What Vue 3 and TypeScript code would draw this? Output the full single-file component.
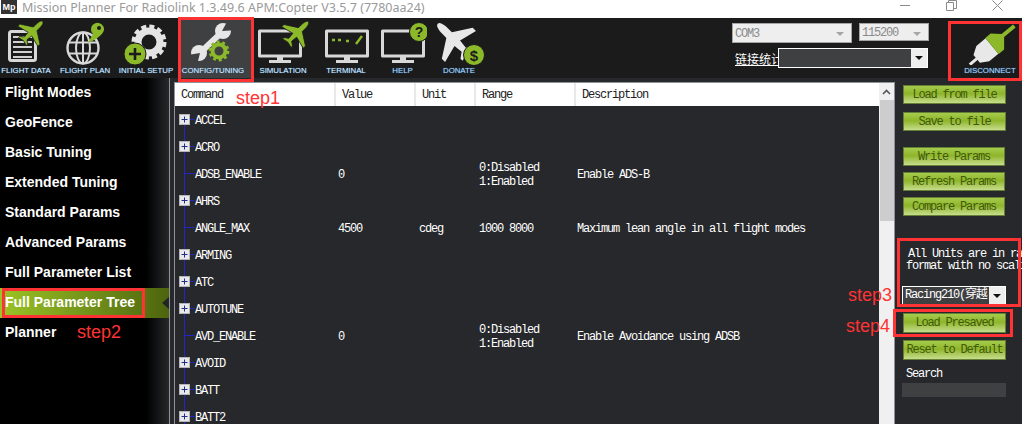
<script setup lang="ts">
interface ParamRow {
  name: string
  group: boolean
  value?: string
  unit?: string
  range?: string[]
  desc?: string
}

const menu: string[] = [
  'Flight Modes',
  'GeoFence',
  'Basic Tuning',
  'Extended Tuning',
  'Standard Params',
  'Advanced Params',
  'Full Parameter List',
  'Full Parameter Tree',
  'Planner'
]

const rows: ParamRow[] = [
  { name: 'ACCEL', group: true },
  { name: 'ACRO', group: true },
  { name: 'ADSB_ENABLE', group: false, value: '0', range: ['0:Disabled', '1:Enabled'], desc: 'Enable ADS-B' },
  { name: 'AHRS', group: true },
  { name: 'ANGLE_MAX', group: false, value: '4500', unit: 'cdeg', range: ['1000 8000'], desc: 'Maximum lean angle in all flight modes' },
  { name: 'ARMING', group: true },
  { name: 'ATC', group: true },
  { name: 'AUTOTUNE', group: true },
  { name: 'AVD_ENABLE', group: false, value: '0', range: ['0:Disabled', '1:Enabled'], desc: 'Enable Avoidance using ADSB' },
  { name: 'AVOID', group: true },
  { name: 'BATT', group: true },
  { name: 'BATT2', group: true }
]

const plane = 'M0,-20 C2.6,-20 3.4,-15 3.4,-11 L3.4,-6 L19,4 L19,8 L3.4,4 L2.6,12 L7.5,15.5 L7.5,18 L0,16.2 L-7.5,18 L-7.5,15.5 L-2.6,12 L-3.4,4 L-19,8 L-19,4 L-3.4,-6 L-3.4,-11 C-3.4,-15 -2.6,-20 0,-20Z'
</script>

<template>
  <div class="page">
    <header class="titlebar">
      <span class="logo">Mp</span>
      <span class="title">Mission Planner For Radiolink 1.3.49.6 APM:Copter V3.5.7 (7780aa24)</span>
      <span class="winbtns">
        <svg width="11" height="11" viewBox="0 0 11 11"><path d="M0 5.5h10" stroke="#8a8a8a" fill="none" /></svg>
        <svg width="11" height="11" viewBox="0 0 11 11"><path d="M.5 2.5h7v8h-7zM2.5 2.5v-2h8v8h-3" stroke="#8a8a8a" fill="none" /></svg>
        <svg width="11" height="11" viewBox="0 0 11 11"><path d="M.5 .5l10 10M10.5 .5l-10 10" stroke="#8a8a8a" fill="none" /></svg>
      </span>
    </header>

    <nav class="toolbar">
      <div class="tool" style="width:52px">
        <svg width="52" height="47" viewBox="0 0 52 47">
          <rect x="9.500" y="13.500" width="26" height="29" rx="2" fill="none" stroke="#d8d8d8" stroke-width="3" />
          <path d="M13 19h19M13 24h19M13 29h19M13 34h19M13 39h19" stroke="#d0d0d0" stroke-width="2.200" />
          <path :d="plane" fill="#8cb92a" stroke="#1b1b1b" transform="translate(32 14) rotate(45) scale(.75)" />
        </svg>
        <span>FLIGHT DATA</span>
      </div>
      <div class="tool" style="width:66px">
        <svg width="66" height="47" viewBox="0 0 66 47">
          <circle cx="31" cy="30" r="15.500" fill="none" stroke="#d8d8d8" stroke-width="2.400" />
          <ellipse cx="31" cy="30" rx="7" ry="15.500" fill="none" stroke="#d8d8d8" stroke-width="2" />
          <path d="M31 15v30M17 24.500h28M17 35.500h28" stroke="#d8d8d8" stroke-width="2" />
          <path d="M36 25c2-4 4-7 5-9a6.500 6.500 0 1 1 11-4c-1 5-9 10-16 13z" fill="#8cb92a" />
          <circle cx="47" cy="10" r="2" fill="#1b1b1b" />
        </svg>
        <span>FLIGHT PLAN</span>
      </div>
      <div class="tool" style="width:56px">
        <svg width="56" height="47" viewBox="0 0 56 47">
          <circle cx="31" cy="24" r="11" fill="none" stroke="#e4e4e4" stroke-width="7" />
          <circle cx="31" cy="24" r="15.500" fill="none" stroke="#e4e4e4" stroke-width="4" stroke-dasharray="5 3.100" />
          <circle cx="17" cy="36" r="11" fill="#8cb92a" stroke="#1b1b1b" />
          <path d="M17 30v12M11 36h12" stroke="#1b1b1b" stroke-width="2.600" />
        </svg>
        <span>INITIAL SETUP</span>
      </div>
      <div class="tool active" style="width:74px;margin-left:4px">
        <svg width="74" height="47" viewBox="0 0 74 47">
          <path d="M24 33L42 16" stroke="#e6e6e6" stroke-width="6" />
          <circle cx="45" cy="13" r="8" fill="#e6e6e6" />
          <path d="M44 13L50 2L60 12z" fill="#3f4042" />
          <circle cx="21" cy="35" r="8" fill="#e6e6e6" />
          <path d="M22 35L10 37L19 47z" fill="#3f4042" />
          <circle cx="41" cy="33" r="6.500" fill="none" stroke="#8cb92a" stroke-width="4" />
          <circle cx="41" cy="33" r="9.200" fill="none" stroke="#8cb92a" stroke-width="2.400" stroke-dasharray="3 2.800" />
        </svg>
        <span class="shift">CONFIG/TUNING</span>
      </div>
      <div class="tool" style="width:62px">
        <svg width="62" height="47" viewBox="0 0 62 47">
          <path d="M7.500 13h41v25h-41z" fill="none" stroke="#d8d8d8" stroke-width="3" stroke-linejoin="round" />
          <path d="M25 39h6v4h-6zM17 42h22v3H17z" fill="#d8d8d8" />
          <path :d="plane" fill="#8cb92a" stroke="#1b1b1b" transform="translate(45 15) rotate(45) scale(.8)" />
        </svg>
        <span>SIMULATION</span>
      </div>
      <div class="tool" style="width:64px">
        <svg width="64" height="47" viewBox="0 0 64 47">
          <path d="M12.500 13h41v25h-41z" fill="none" stroke="#d8d8d8" stroke-width="3" stroke-linejoin="round" />
          <path d="M30 39h6v4h-6zM22 42h22v3H22z" fill="#d8d8d8" />
          <path d="M18 22h3M24 22h3M32 23h3M42 26l6-8" stroke="#8cb92a" stroke-width="2.400" />
        </svg>
        <span>TERMINAL</span>
      </div>
      <div class="tool" style="width:49px">
        <svg width="49" height="47" viewBox="0 0 49 47">
          <path d="M4.500 13h41v25h-41z" fill="none" stroke="#d8d8d8" stroke-width="3" stroke-linejoin="round" />
          <path d="M22 39h6v4h-6zM14 42h22v3H14z" fill="#d8d8d8" />
          <circle cx="41" cy="14" r="9.500" fill="#8cb92a" stroke="#1b1b1b" />
          <text x="41" y="19" class="glyph" font-size="14">?</text>
        </svg>
        <span class="blue">HELP</span>
      </div>
      <div class="tool" style="width:64px">
        <svg width="64" height="47" viewBox="0 0 64 47">
          <path :d="plane" fill="#e8e8e8" transform="translate(27 22) rotate(-45) scale(1.150)" />
          <circle cx="47" cy="37" r="10.500" fill="#8cb92a" stroke="#1b1b1b" />
          <text x="47" y="42.500" class="glyph" font-size="15">$</text>
        </svg>
        <span class="blue">DONATE</span>
      </div>

      <div class="conn">
        <div class="conn-top">
          <div class="combo com">COM3<i class="caret" /></div>
          <div class="combo baud">115200<i class="caret" /></div>
        </div>
        <div class="conn-bottom">
          <a class="stats">链接统计</a>
          <div class="darkselect stats-select"><span class="dropbtn"><i class="caret dark" /></span></div>
        </div>
      </div>

      <div class="tool disconnect">
        <svg width="74" height="47" viewBox="0 0 74 47">
          <g transform="translate(44 28) rotate(-40)">
            <path d="M-29 -1.500h10v3h-10z" fill="#e8e8e8" />
            <path d="M-20 -5L-12 -10H0V10H-12L-20 5z" fill="#e8e8e8" />
            <path d="M0 -10.500H7L15 -3H30V1H15L7 10.500H0z" fill="#8cb92a" />
          </g>
        </svg>
        <span class="blue nudge">DISCONNECT</span>
      </div>
    </nav>

    <div class="body">
      <aside class="sidebar">
        <div v-for="item in menu" :key="item" class="menu-item" :class="{ selected: item === 'Full Parameter Tree' }">
          {{ item }}
        </div>
      </aside>

      <main class="content">
        <section class="grid-wrap">
          <div class="grid">
            <div class="row head">
              <div class="cell c-cmd">Command</div>
              <div class="cell c-val">Value</div>
              <div class="cell c-unit">Unit</div>
              <div class="cell c-range">Range</div>
              <div class="cell c-desc">Description</div>
            </div>
            <div v-for="(row, i) in rows" :key="row.name" class="row">
              <div class="tree">
                <svg class="branch" width="20" height="27" viewBox="0 0 20 27">
                  <path :d="i === 0 ? 'M9.500 13v14M9.500 13.500h10' : 'M9.500 0v27M9.500 13.500h10'" stroke="#2424c8" fill="none" />
                  <template v-if="row.group">
                    <rect x="4.500" y="8.500" width="10" height="10" fill="#e8e8ee" stroke="#b4b4b4" />
                    <path d="M6.500 13.500h6M9.500 10.500v6" stroke="#20307a" fill="none" />
                  </template>
                </svg>
                <span class="txt">{{ row.name }}</span>
              </div>
              <div class="val txt">{{ row.value }}</div>
              <div class="unit txt">{{ row.unit }}</div>
              <div class="range txt"><div v-for="r in row.range" :key="r">{{ r }}</div></div>
              <div class="desc txt">{{ row.desc }}</div>
            </div>
          </div>
          <div class="scrollbar">
            <div class="arrow">
              <svg width="9" height="6" viewBox="0 0 9 6"><path d="M1 5l3.500-3.500L8 5" fill="none" stroke="#555" stroke-width="1.600" /></svg>
            </div>
            <div class="thumb" />
          </div>
        </section>

        <section class="side">
          <button class="btn">Load from file</button>
          <button class="btn save">Save to file</button>
          <button class="btn narrow write">Write Params</button>
          <button class="btn narrow refresh">Refresh Params</button>
          <button class="btn narrow compare">Compare Params</button>
          <p class="info">
            <span class="line-a">All Units are in raw</span>
            <span>format with no scaling</span>
          </p>
          <div class="darkselect preset">
            <span class="preset-text">Racing210(穿越</span>
            <span class="dropbtn"><i class="caret dark" /></span>
          </div>
          <button class="btn tall presaved">Load Presaved</button>
          <button class="btn tall reset">Reset to Default</button>
          <label class="search-label">Search</label>
          <div class="search" />
        </section>
      </main>
    </div>

    <div class="mark m-config" />
    <div class="mark m-disconnect" />
    <div class="mark m-tree" />
    <div class="mark m-info" />
    <div class="mark m-load" />
    <span class="step s1">step1</span>
    <span class="step s2">step2</span>
    <span class="step s3">step3</span>
    <span class="step s4">step4</span>
  </div>
</template>

<style>
html,
body {
  margin: 0;
  background: #fff;
}
</style>

<style scoped>
.page {
  position: relative;
  width: 1022px;
  height: 424px;
  overflow: hidden;
  display: flex;
  flex-direction: column;
  background: #26282b;
  font-family: "Liberation Mono", "Noto Sans CJK SC", monospace;
}

.titlebar {
  height: 18px;
  background: #fff;
  display: flex;
  align-items: flex-start;
  flex: none;
}
.logo {
  width: 16px;
  height: 14px;
  margin: 0 5px 0 1px;
  background: #333;
  color: #fff;
  font: bold 9px/14px "Liberation Sans", sans-serif;
  text-align: center;
}
.title {
  font: 12.5px/16px "Noto Sans", sans-serif;
  color: #9a9a9a;
  white-space: nowrap;
}
.winbtns {
  margin-left: auto;
  margin-right: 19px;
  display: flex;
  gap: 35px;
}

.toolbar {
  height: 60px;
  flex: none;
  display: flex;
  background: #1b1b1b;
}
.tool {
  flex: none;
  height: 60px;
  display: flex;
  flex-direction: column;
  align-items: center;
  font: 7.8px/9px "Liberation Sans", sans-serif;
  color: #dcecf8;
  text-shadow: 0 0 1px #3b8ad8;
  white-space: nowrap;
}
.tool svg {
  display: block;
  flex: none;
  margin-bottom: 1px;
}
.tool .blue {
  color: #a8d2f4;
}
.tool.active {
  background: #3f4042;
}
.shift {
  margin-right: 4px;
}
.nudge {
  margin-left: 10px;
}
.glyph {
  font-family: "Liberation Sans", sans-serif;
  font-weight: bold;
  text-anchor: middle;
  fill: #1c1c1c;
  text-shadow: none;
}

.conn {
  margin-left: 241px;
  width: 197px;
  padding-top: 5px;
}
.conn-top {
  display: flex;
  align-items: flex-start;
  gap: 7px;
}
.combo {
  position: relative;
  box-sizing: border-box;
  background: #eeeeee;
  border: 1px solid #a5a5a5;
  color: #8a8a8a;
  font-size: 12px;
  letter-spacing: -1.2px;
  padding: 3px 2px;
}
.com {
  width: 120px;
  height: 20px;
}
.baud {
  width: 70px;
  height: 18px;
  padding-top: 2px;
}
.caret {
  position: absolute;
  right: 7px;
  top: 8px;
  border: 4px solid transparent;
  border-top: 4px solid #a6a6a6;
  border-bottom: 0;
}
.caret.dark {
  position: static;
  display: block;
  border-top-color: #111;
}
.conn-bottom {
  display: flex;
  align-items: center;
  margin-top: 5px;
  margin-left: 3px;
}
.stats {
  width: 43px;
  flex: none;
  overflow: hidden;
  white-space: nowrap;
  font: 12px "Noto Sans CJK SC", sans-serif;
  color: #fff;
  text-decoration: underline;
}
.darkselect {
  box-sizing: border-box;
  display: flex;
  border: 1px solid #fff;
  background: #3f4042;
  color: #fff;
}
.stats-select {
  width: 150px;
  height: 20px;
  justify-content: flex-end;
}
.dropbtn {
  width: 16px;
  flex: none;
  margin-left: auto;
  display: flex;
  align-items: center;
  justify-content: center;
  background: #eeeeee;
}
.disconnect {
  margin-left: 19px;
  width: 74px;
}

.body {
  flex: 1;
  display: flex;
  min-height: 0;
}
.sidebar {
  width: 169px;
  flex: none;
  box-sizing: border-box;
  background: linear-gradient(90deg, #000 0, #000 146px, #26282b 169px);
}
.menu-item {
  height: 30px;
  padding-left: 5px;
  font: bold 14px/29px "Liberation Sans", sans-serif;
  color: #fff;
}
.menu-item.selected {
  background: linear-gradient(90deg, #9cc425, #4d640e);
  clip-path: polygon(0 0, 100% 0, 100% 29%, 96% 50%, 100% 71%, 100% 100%, 0 100%);
}

.content {
  flex: 1;
  display: flex;
  align-items: flex-start;
  box-sizing: border-box;
  height: 346px;
  border-left: 1px solid #8f9296;
  padding: 4px 0 0 4px;
  min-width: 0;
  font-size: 12px;
  letter-spacing: -1.2px;
  color: #fff;
}

.grid-wrap {
  display: flex;
  width: 721px;
  height: 342px;
  flex: none;
  box-sizing: border-box;
  border-left: 1px solid #8f9296;
  border-top: 1px solid #8f9296;
  border-right: 2px solid #8f9296;
}
.grid {
  width: 704px;
  flex: none;
}
.row {
  display: flex;
  height: 27px;
  align-items: center;
}
.row.head {
  height: 23px;
  background: #fff;
  color: #222;
}
.txt {
  margin-top: 2px;
}
.cell {
  box-sizing: border-box;
  height: 23px;
  line-height: 25px;
  padding-left: 6px;
  border-right: 2px solid #e8e8e8;
}
.c-cmd {
  width: 161px;
}
.c-val {
  width: 80px;
}
.c-unit {
  width: 60px;
}
.c-range {
  width: 100px;
}
.c-desc {
  flex: 1;
  border-right: 0;
}
.tree {
  width: 163px;
  height: 27px;
  flex: none;
  display: flex;
  align-items: center;
}
.branch {
  flex: none;
}
.val {
  width: 81px;
  flex: none;
}
.unit {
  width: 60px;
  flex: none;
}
.range {
  width: 98px;
  flex: none;
  line-height: 14px;
}
.desc {
  white-space: nowrap;
}
.scrollbar {
  width: 15px;
  flex: none;
  background: #f0f0f0;
  height: 341px;
}
.arrow {
  height: 17px;
  display: flex;
  align-items: center;
  justify-content: center;
}
.thumb {
  height: 121px;
  margin-left: 1px;
  background: #cdcdcd;
}

.side {
  flex: 1;
  min-width: 0;
  padding: 2px 0 0 8px;
  overflow: hidden;
  height: 344px;
}
.btn {
  display: block;
  box-sizing: border-box;
  width: 103px;
  height: 19px;
  padding: 0;
  margin: 1px 0 0;
  border: 1px solid #657f35;
  background: linear-gradient(#a5cc4c, #8fb52b 45%, #c6dd8c);
  color: #3f5a0a;
  font-family: inherit;
  font-size: 12px;
  letter-spacing: -1.2px;
  text-align: center;
}
.save {
  margin-top: 8px;
}
.narrow {
  width: 102px;
}
.write {
  margin-top: 16px;
}
.refresh,
.compare {
  margin-top: 6px;
}
.tall {
  height: 20px;
}
.info {
  margin: 32px 0 0;
  padding-left: 3px;
  line-height: 12px;
  white-space: nowrap;
}
.info span {
  display: block;
}
.line-a {
  padding-left: 2px;
}
.preset {
  margin: 14px 0 0 -1px;
  width: 104px;
  height: 19px;
  line-height: 17px;
}
.preset-text {
  padding-left: 2px;
  white-space: nowrap;
}
.presaved {
  margin-top: 8px;
}
.reset {
  margin-top: 7px;
}
.search-label {
  display: block;
  margin-top: 8px;
  padding-left: 3px;
  height: 12px;
  line-height: 12px;
}
.search {
  margin: 3px 0 0 -1px;
  width: 104px;
  height: 14px;
  background: #3f4042;
}

.mark {
  position: absolute;
  box-sizing: border-box;
  border: 3px solid #f33;
  pointer-events: none;
}
.m-config {
  left: 178px;
  top: 17px;
  width: 76px;
  height: 65px;
}
.m-disconnect {
  left: 948px;
  top: 21px;
  width: 74px;
  height: 60px;
}
.m-tree {
  left: 2px;
  top: 288px;
  width: 143px;
  height: 30px;
}
.m-info {
  left: 897px;
  top: 238px;
  width: 124px;
  height: 69px;
}
.m-load {
  left: 893px;
  top: 309px;
  width: 120px;
  height: 28px;
}
.step {
  position: absolute;
  font: 18px/20px "Liberation Sans", sans-serif;
  color: #f33;
}
.s1 {
  left: 236px;
  top: 88px;
}
.s2 {
  left: 77px;
  top: 322px;
}
.s3 {
  left: 848px;
  top: 285px;
}
.s4 {
  left: 846px;
  top: 316px;
}
</style>
